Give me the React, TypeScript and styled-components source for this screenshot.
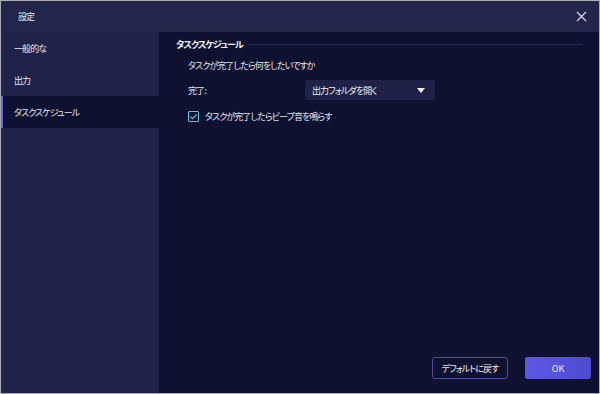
import React, { useState } from 'react';
import styled, { createGlobalStyle } from 'styled-components';

const Global = createGlobalStyle`
  html, body {
    margin: 0;
    padding: 0;
    background: #0f1131;
  }
  * {
    box-sizing: border-box;
  }
`;

const menu = ['一般的な', '出力', 'タスクスケジュール'];

const App: React.FC = () => {
  const [active, setActive] = useState(2);
  const [beep, setBeep] = useState(true);

  return (
    <Window>
      <Global />
      <TitleBar>
        <TitleText>設定</TitleText>
        <CloseButton aria-label="close">
          <svg width="11" height="11" viewBox="0 0 11 11">
            <path d="M1 1 L10 10 M10 1 L1 10" stroke="#d8d9e6" strokeWidth="1.2" />
          </svg>
        </CloseButton>
      </TitleBar>
      <Body>
        <Sidebar>
          {menu.map((label, i) => (
            <MenuItem key={label} active={i === active} onClick={() => setActive(i)}>
              {label}
            </MenuItem>
          ))}
        </Sidebar>
        <Content>
          <SectionHeader>
            <SectionTitle>タスクスケジュール</SectionTitle>
            <SectionRule />
          </SectionHeader>
          <Section>
            <Question>タスクが完了したら何をしたいですか</Question>
            <FieldRow>
              <FieldLabel>完了:</FieldLabel>
              <Select>
                <span>出力フォルダを開く</span>
                <svg width="8" height="5" viewBox="0 0 8 5">
                  <path d="M0 0 H8 L4 5 Z" fill="#ffffff" />
                </svg>
              </Select>
            </FieldRow>
            <CheckRow onClick={() => setBeep(!beep)}>
              <CheckBox>
                {beep && (
                  <svg width="9" height="9" viewBox="0 0 9 9">
                    <path d="M1.5 4.6 L3.6 6.6 L7.6 2.4" stroke="#63c6dc" strokeWidth="1.2" fill="none" />
                  </svg>
                )}
              </CheckBox>
              <span>タスクが完了したらビープ音を鳴らす</span>
            </CheckRow>
          </Section>
          <Footer>
            <GhostButton>デフォルトに戻す</GhostButton>
            <PrimaryButton>OK</PrimaryButton>
          </Footer>
        </Content>
      </Body>
    </Window>
  );
};

const Window = styled.div`
  width: 600px;
  height: 394px;
  display: flex;
  flex-direction: column;
  border: 1px solid #a9aab4;
  background: #0f1131;
  font-family: "Noto Sans CJK JP", "Noto Sans", sans-serif;
  font-feature-settings: "palt";
  font-size: 9px;
  letter-spacing: -0.9px;
  color: #e6e7ef;
  overflow: hidden;
`;

const TitleBar = styled.div`
  height: 31px;
  flex: none;
  display: flex;
  align-items: center;
  justify-content: space-between;
  padding: 0 8px 0 17px;
  background: #23254b;
`;

const TitleText = styled.div`
  color: #e8e9f0;
`;

const CloseButton = styled.button`
  width: 20px;
  height: 20px;
  border: none;
  background: none;
  padding: 0;
  display: flex;
  align-items: center;
  justify-content: center;
  cursor: pointer;
`;

const Body = styled.div`
  flex: 1;
  display: flex;
  min-height: 0;
`;

const Sidebar = styled.div`
  width: 158px;
  flex: none;
  background: #20224a;
  display: flex;
  flex-direction: column;
`;

const MenuItem = styled.div<{ active: boolean }>`
  height: 32px;
  display: flex;
  align-items: center;
  padding-left: 13px;
  color: #e6e7ef;
  cursor: pointer;
  background: ${(p) => (p.active ? '#0f1131' : 'transparent')};
  box-shadow: ${(p) => (p.active ? 'inset 2px 0 0 #6b62f0' : 'none')};
`;

const Content = styled.div`
  flex: 1;
  display: flex;
  flex-direction: column;
  padding: 4px 8px 14px 17px;
`;

const SectionHeader = styled.div`
  display: flex;
  align-items: center;
  gap: 4px;
  height: 16px;
`;

const SectionTitle = styled.div`
  font-weight: 700;
  color: #f0f1f6;
`;

const SectionRule = styled.div`
  flex: 1;
  height: 1px;
  background: #252852;
  margin-right: 8px;
`;

const Section = styled.div`
  display: flex;
  flex-direction: column;
  padding-left: 12px;
  padding-top: 4px;
`;

const Question = styled.div`
  height: 18px;
  display: flex;
  align-items: center;
`;

const FieldRow = styled.div`
  display: flex;
  align-items: center;
  margin-top: 6px;
  height: 20px;
`;

const FieldLabel = styled.div`
  width: 117px;
`;

const Select = styled.div`
  width: 130px;
  height: 20px;
  border-radius: 3px;
  background: #1f2146;
  display: flex;
  align-items: center;
  justify-content: space-between;
  padding: 0 10px 0 7px;
  color: #eceef5;
`;

const CheckRow = styled.label`
  display: flex;
  align-items: center;
  gap: 6px;
  margin-top: 6px;
  height: 20px;
  cursor: pointer;
`;

const CheckBox = styled.span`
  width: 11px;
  height: 11px;
  border: 1px solid #63c6dc;
  border-radius: 1px;
  display: flex;
  align-items: center;
  justify-content: center;
`;

const Footer = styled.div`
  margin-top: auto;
  display: flex;
  justify-content: flex-end;
  gap: 17px;
`;

const ButtonBase = styled.button`
  height: 22px;
  padding: 0;
  border-radius: 3px;
  font-family: inherit;
  font-feature-settings: "palt";
  font-size: 9px;
  letter-spacing: -0.9px;
  white-space: nowrap;
  color: #eef0f7;
  cursor: pointer;
`;

const GhostButton = styled(ButtonBase)`
  width: 76px;
  background: transparent;
  border: 1px solid #4a4b99;
`;

const PrimaryButton = styled(ButtonBase)`
  width: 66px;
  border: none;
  letter-spacing: 0;
  background: linear-gradient(90deg, #5d59e6, #4e4ad0);
`;

export default App;
